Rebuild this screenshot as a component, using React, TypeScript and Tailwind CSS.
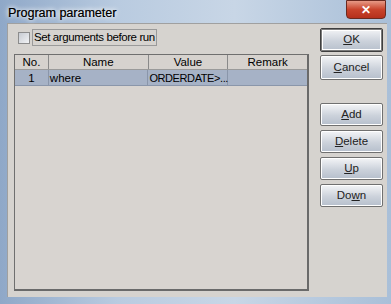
import React from "react";

function Btn({ label, u, h = "h-[24px]", dflt = false }: { label: string; u: number; h?: string; dflt?: boolean }) {
  const pre = label.slice(0, u);
  const ch = label.slice(u, u + 1);
  const post = label.slice(u + 1);
  return (
    <div
      className={`w-[63px] ${h} flex items-center justify-center border ${dflt ? "border-[#3f3f3f] shadow-[inset_0_0_0_1px_#7a7a7a,inset_0_0_0_2px_#fff]" : "border-[#707070] shadow-[inset_0_0_0_1px_#fff]"} rounded-[2px] text-[11.5px] text-[#222] bg-[linear-gradient(#f4f5f7,#ccd2db_55%,#b6bfcc)]`}
    >
      <span>
        {pre}
        <span className="underline">{ch}</span>
        {post}
      </span>
    </div>
  );
}

export default function App() {
  return (
    <div
      className="w-[391px] h-[304px] overflow-hidden bg-[linear-gradient(90deg,#8fa8c8,#b9cbe0_30%,#c8d6e6_60%,#a9bfd8)] flex flex-col"
      style={{ fontFamily: '"Liberation Sans", Arial, sans-serif' }}
    >
      {/* title bar */}
      <div className="h-[23px] flex items-start relative shrink-0">
        <div className="pl-[8px] pt-[4px] text-[12.5px] text-black [text-shadow:0_0_4px_#fff,0_0_6px_#fff,0.3px_0_0_#000]">Program parameter</div>
        <div className="absolute right-[5px] top-0 w-[40px] h-[19px] rounded-b-[4px] border border-[#6b2a20] bg-[linear-gradient(#e79a86,#c9442c_50%,#b5301c)] flex items-center justify-center text-white text-[12px] font-bold">
          ✕
        </div>
      </div>
      {/* content */}
      <div className="ml-[7px] mr-[4px] h-[274px] bg-[#d6d3cf] border-t border-l border-[#a0a0a0] flex">
        <div className="w-[308px] flex flex-col pl-[6px] pt-[5px]">
          <div className="flex items-center h-[17px]">
            <div className="ml-[4px] w-[12px] h-[12px] border border-[#8c8c8c] bg-[linear-gradient(135deg,#c7cbd2,#f2f3f5)]" />
            <div className="ml-[2px] px-[1px] border border-[#9a9a9a] text-[11.5px] tracking-[-0.4px] text-black leading-[15px]">Set arguments before run</div>
          </div>
          <div className="mt-[8px] w-[295px] h-[237px] border-t border-l border-[#6f6f6f] border-b-2 border-r-2 border-b-[#6a6a6a] border-r-[#6a6a6a] bg-[#d8d4d0] flex flex-col">
            <div className="flex h-[15px] text-[11.5px] text-black leading-[15px] bg-[#d6d2ce] border-b border-[#9a9a9a]">
              <div className="w-[34px] text-center border-r border-[#8a8a8a]">No.</div>
              <div className="w-[100px] text-center border-r border-[#8a8a8a]">Name</div>
              <div className="w-[80px] text-center border-r border-[#8a8a8a]">Value</div>
              <div className="w-[79px] text-center">Remark</div>
            </div>
            <div className="flex h-[16px] text-[11.5px] text-black leading-[16px] bg-[#a6b2c6] border-b border-[#8a96aa]">
              <div className="w-[34px] text-center border-r border-[#8a96aa]">1</div>
              <div className="w-[100px] pl-[1px] border-r border-[#8a96aa]">where</div>
              <div className="w-[80px] pl-[1px] border-r border-[#8a96aa] whitespace-nowrap tracking-[-0.4px] text-[11px]">ORDERDATE&gt;...</div>
              <div className="w-[79px]" />
            </div>
          </div>
        </div>
        <div className="flex flex-col pl-[4px] pt-[4px]">
          <Btn label="OK" u={0} dflt />
          <div className="h-[3px]" />
          <Btn label="Cancel" u={0} h="h-[25px]" />
          <div className="h-[23px]" />
          <Btn label="Add" u={0} h="h-[23px]" />
          <div className="h-[4px]" />
          <Btn label="Delete" u={0} h="h-[23px]" />
          <div className="h-[4px]" />
          <Btn label="Up" u={0} h="h-[23px]" />
          <div className="h-[4px]" />
          <Btn label="Down" u={2} h="h-[23px]" />
        </div>
      </div>
    </div>
  );
}
